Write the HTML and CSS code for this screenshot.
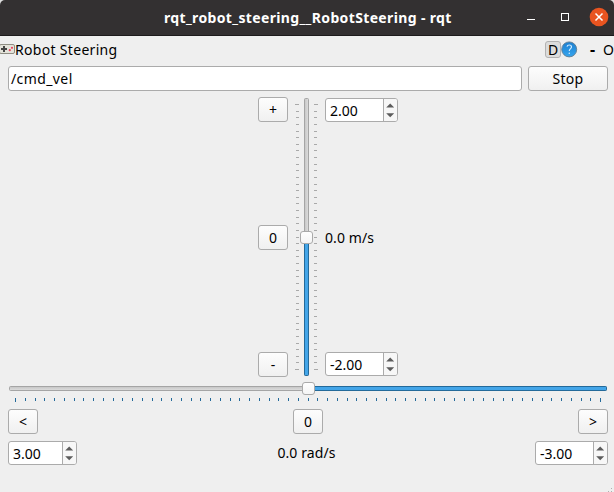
FILE: index.html
```html
<!DOCTYPE html>
<html lang="en">
<head>
<meta charset="utf-8">
<title>rqt_robot_steering__RobotSteering - rqt</title>
<link rel="stylesheet" href="styles.css">
</head>
<body>
<div class="window">
  <header class="titlebar">
    <h1 class="title">rqt_robot_steering__RobotSteering - rqt</h1>
    <svg class="controls" width="94" height="35" viewBox="520 0 94 35">
      <path d="M527 19.5h8" stroke="#fff" fill="none"/>
      <rect x="561.5" y="13.5" width="7" height="7" stroke="#fff" fill="none"/>
      <circle cx="599" cy="17" r="9.3" fill="#e95420"/>
      <path d="M595.5 13.5l7 7m0-7l-7 7" stroke="#fff" stroke-width="1.5" fill="none"/>
    </svg>
  </header>
  <div class="dock">
    <svg class="pad" width="15" height="16" viewBox="0 0 15 16">
      <rect x="-.5" y="3.5" width="15" height="9" rx="1.5" fill="#e4e3da" stroke="#8f8e84"/>
      <path d="M1 8h6M4 5v6" stroke="#454545" stroke-width="2"/>
      <circle cx="12" cy="6.8" r="1.1" fill="#ee3f5c"/><circle cx="9.8" cy="9.2" r="1.1" fill="#ee3f5c"/>
    </svg>
    <span class="dock-name">Robot Steering</span>
    <button class="dbtn">D</button>
    <svg class="help" width="17" height="17" viewBox="0 0 17 17">
      <defs><linearGradient id="hg" x2="0" y2="1"><stop stop-color="#1d7fd0"/><stop offset="1" stop-color="#35a5ee"/></linearGradient></defs>
      <circle cx="8.2" cy="8.4" r="7.5" fill="url(#hg)" stroke="#617d92" stroke-width=".9"/>
      <path d="M6 5.7Q6.3 4 8.3 4Q10.5 4 10.5 6C10.5 7.7 8.3 7.6 8.3 10" fill="none" stroke="#cfeaff" stroke-width="1.2"/>
      <circle cx="8.3" cy="12.3" r=".8" fill="#cfeaff"/>
    </svg>
    <span class="dash">-</span><span class="oh">O</span>
  </div>
  <div class="topic"><div class="field">/cmd_vel</div><button class="btn stop">Stop</button></div>
  <div class="linear">
    <div class="col buttons"><button class="btn">+</button><button class="btn">0</button><button class="btn">-</button></div>
    <svg class="vslider" width="24" height="280" viewBox="295 97 24 280">
      <defs>
        <linearGradient id="gv"><stop stop-color="#c5c5c5"/><stop offset="1" stop-color="#dedede"/></linearGradient>
        <linearGradient id="hv" x2="0" y2="1"><stop stop-color="#fff"/><stop offset="1" stop-color="#f4f4f4"/></linearGradient>
      </defs>
      <g stroke="#a9a9a9" shape-rendering="crispEdges">
        <path d="M297.5 104V370M315.5 104V370" stroke-width="3" stroke-dasharray="1 5.625"/>
        <path d="M295 104.5h1M317 104.5h1M295 369.5h1M317 369.5h1"/>
      </g>
      <rect x="304.5" y="98.5" width="4" height="277" rx="1" fill="url(#gv)" stroke="#a5a5a5"/>
      <rect x="304.5" y="238.5" width="4" height="137" rx="1" fill="#43a5e8" stroke="#246a9a"/>
      <rect x="300.5" y="231.5" width="12" height="12" rx="2.5" fill="url(#hv)" stroke="#aaa"/>
    </svg>
    <div class="col values">
      <div class="spin"><span>2.00</span><svg class="arrows" width="14" height="22" viewBox="0 0 13 22"><path d="M2.2 8.5L6.2 4.5 10.2 8.5zM2.2 14.3L6.2 18.3 10.2 14.3z"/></svg></div>
      <span class="speed">0.0 m/s</span>
      <div class="spin"><span>-2.00</span><svg class="arrows" width="14" height="22" viewBox="0 0 13 22"><path d="M2.2 8.5L6.2 4.5 10.2 8.5zM2.2 14.3L6.2 18.3 10.2 14.3z"/></svg></div>
    </div>
  </div>
  <svg class="hslider" width="614" height="32" viewBox="0 377 614 32">
    <defs><linearGradient id="gh" x2="0" y2="1"><stop stop-color="#c5c5c5"/><stop offset="1" stop-color="#dedede"/></linearGradient></defs>
    <g stroke="#246a9a" shape-rendering="crispEdges">
      <path d="M15 399.5H601" stroke-width="3" stroke-dasharray="1 8.75"/>
      <path d="M15.5 401v1M600.5 401v1"/>
    </g>
    <rect x="9.5" y="386.5" width="597" height="4" rx="1" fill="url(#gh)" stroke="#a5a5a5"/>
    <rect x="308.5" y="386.5" width="298" height="4" rx="1" fill="#43a5e8" stroke="#246a9a"/>
    <rect x="302.5" y="382.5" width="12" height="12" rx="2.5" fill="url(#hv)" stroke="#aaa"/>
  </svg>
  <div class="row turn"><button class="btn">&lt;</button><button class="btn">0</button><button class="btn">&gt;</button></div>
  <div class="row angular">
    <div class="spin narrow"><span>3.00</span><svg class="arrows" width="14" height="22" viewBox="0 0 13 22"><path d="M2.2 8.5L6.2 4.5 10.2 8.5zM2.2 14.3L6.2 18.3 10.2 14.3z"/></svg></div>
    <span class="rate">0.0 rad/s</span>
    <div class="spin"><span>-3.00</span><svg class="arrows" width="14" height="22" viewBox="0 0 13 22"><path d="M2.2 8.5L6.2 4.5 10.2 8.5zM2.2 14.3L6.2 18.3 10.2 14.3z"/></svg></div>
  </div>
  <svg class="grip" width="8" height="6" viewBox="606 486 8 6"><path d="M611 488h1v1h-1zM608 491h1v1h-1zM611 491h1v1h-1z" fill="#b0b0b0"/></svg>
</div>
</body>
</html>
```
FILE: styles.css
```css
* { box-sizing: border-box; }
body { margin: 0; background: #dedede; font: 14px/20px "Noto Sans", sans-serif; color: #000; overflow: hidden; }
.window { width: 614px; height: 492px; display: flex; flex-direction: column; background: #efefef; border-radius: 5px 5px 0 0; overflow: hidden; }
.window > * { flex: none; }
.titlebar { height: 36px; background: #333031; border-bottom: 1px solid #1d1b1c; display: flex; justify-content: space-between; padding-left: 164px; }
.title { margin: 0; font-size: 14px; line-height: 36px; font-weight: 700; color: #fff; white-space: nowrap; letter-spacing: 0.36px; }
.controls { flex: none; }
.dock { height: 30px; padding-top: 5px; display: flex; white-space: nowrap; overflow: hidden; }
.dock > * { flex: none; }
.dock .dock-name, .oh { line-height: 18px; }
.dock-name { width: 530px; letter-spacing: 0.31px; }
.dbtn { width: 16px; height: 17px; padding: 0; border: 1px solid #b2b2b2; border-radius: 3px; background: #dcdcdc; font: 14px/15px "Noto Sans", sans-serif; color: #000; }
.dash { margin-left: 12px; width: 13px; font-size: 16px; font-weight: 700; line-height: 16px; }
.topic { height: 31px; padding: 0 6px 0 8px; display: flex; gap: 6px; }
.field { flex: 1; height: 25px; background: #fff; border: 1px solid #ababab; border-radius: 3px; padding: 0 2px; line-height: 23px; letter-spacing: 0.4px; }
.btn { width: 30px; height: 25px; padding: 0; border: 1px solid #ababab; border-radius: 3px; background: linear-gradient(#fdfdfd, #f0f0f0); font: 14px/23px "Noto Sans", sans-serif; color: #000; }
.stop { width: 80px; letter-spacing: 0.3px; }
.linear { height: 280px; display: flex; padding-left: 258px; }
.col { display: flex; flex-direction: column; justify-content: space-between; }
.buttons { width: 37px; }
.vslider { margin-right: 6px; }
.values { padding: 1px 0; }
.speed { padding-top: 2px; letter-spacing: 0.1px; }
.rate { padding-left: 1px; letter-spacing: 0.1px; }
.spin { width: 73px; height: 24px; display: flex; justify-content: space-between; background: #fff; border: 1px solid #ababab; border-radius: 3px; padding-left: 4px; line-height: 24px; overflow: hidden; }
.narrow { width: 69px; }
.arrows { flex: none; background: #f7f7f7; border-left: 1px solid #ababab; width: 14px; height: 22px; fill: #5c5c5c; }
.row { display: flex; justify-content: space-between; padding: 0 6px 0 8px; }
.turn { height: 32px; }
.angular { height: 45px; line-height: 24px; }
.grip { align-self: flex-end; }
```
